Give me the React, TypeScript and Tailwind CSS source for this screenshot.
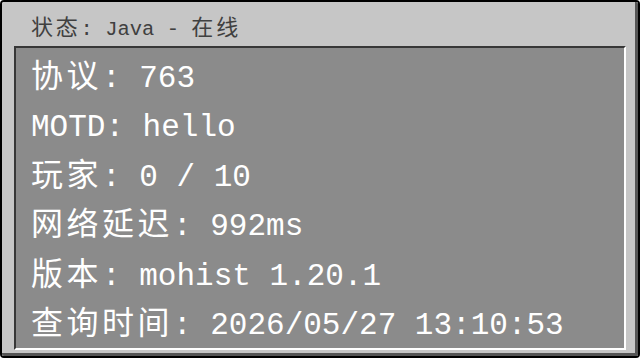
const rows: { label: string; value: string }[] = [
  { label: '协议', value: ': 763' },
  { label: '', value: 'MOTD: hello' },
  { label: '玩家', value: ': 0 / 10' },
  { label: '网络延迟', value: ': 992ms' },
  { label: '版本', value: ': mohist 1.20.1' },
  { label: '查询时间', value: ': 2026/05/27 13:10:53' },
];

const cjk = { fontFamily: '"Noto Sans CJK SC", sans-serif' };
const mono = { fontFamily: '"Liberation Mono", monospace' };

export default function App() {
  return (
    <div className="w-[640px] h-[360px] bg-white">
      <div className="h-[358px] border-2 border-black rounded-[4px] overflow-hidden">
        <div className="h-full flex flex-col bg-[#c6c6c6] border-r-[3px] border-b-[3px] border-[#555555] pl-[12px] pr-[9px] pb-[8px]">
          {/* title */}
          <div className="h-[45px] flex items-center pl-[17px] pt-[7px] text-[#404040]">
            <div className="flex items-baseline whitespace-pre">
              <span className="text-[22px] tracking-[2.8px]" style={cjk}>状态</span>
              <span className="text-[20.5px]" style={mono}>: Java - </span>
              <span className="text-[22px] tracking-[2.8px]" style={cjk}>在线</span>
            </div>
          </div>

          {/* info box */}
          <div className="flex-1 bg-[#8b8b8b] border-t-2 border-l-2 border-[#373737] border-r-2 border-r-white border-b-2 border-b-white flex flex-col pl-[15px] pt-[3px] text-white">
            {rows.map((r, i) => (
              <div key={i} className={`h-[49.5px] flex items-center ${r.label ? '' : 'pt-[7px]'}`}>
                <div className="flex items-baseline whitespace-pre">
                  {r.label && (
                    <span className="text-[32px] tracking-[3.5px]" style={cjk}>{r.label}</span>
                  )}
                  <span className="text-[31px]" style={mono}>{r.value}</span>
                </div>
              </div>
            ))}
          </div>
        </div>
      </div>
    </div>
  );
}
